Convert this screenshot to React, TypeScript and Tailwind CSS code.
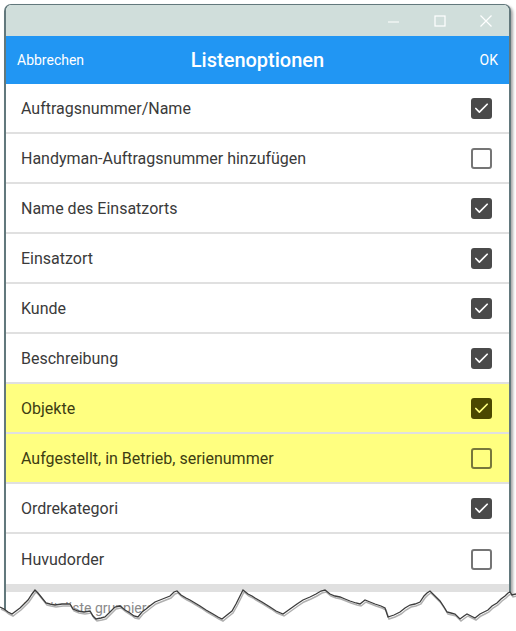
import { Check } from 'lucide-react';

type Option = { label: string; checked: boolean; highlight?: boolean };

const OPTIONS: Option[] = [
  { label: 'Auftragsnummer/Name', checked: true },
  { label: 'Handyman-Auftragsnummer hinzufügen', checked: false },
  { label: 'Name des Einsatzorts', checked: true },
  { label: 'Einsatzort', checked: true },
  { label: 'Kunde', checked: true },
  { label: 'Beschreibung', checked: true },
  { label: 'Objekte', checked: true, highlight: true },
  { label: 'Aufgestellt, in Betrieb, serienummer', checked: false, highlight: true },
  { label: 'Ordrekategori', checked: true },
  { label: 'Huvudorder', checked: false },
];

// torn paper edge, absolute coords of the page
const TEAR: [number, number][] = [
  [0, 607], [4, 609], [8, 612], [12, 614], [16, 611], [20, 608], [24, 604], [28, 600], [32, 594],
  [35, 590], [38, 593], [42, 598], [46, 603], [50, 604], [55, 605], [62, 604], [70, 604],
  [73, 609], [78, 611], [84, 612], [90, 611], [93, 616], [96, 619], [101, 618], [105, 617],
  [110, 612], [115, 607], [120, 606], [125, 610], [130, 613], [134, 616], [138, 617],
  [142, 612], [146, 609], [151, 605], [155, 602], [160, 600], [165, 598], [170, 596],
  [174, 592], [177, 591], [181, 595], [186, 598], [190, 600], [195, 603], [200, 606],
  [206, 610], [213, 614], [218, 617], [222, 619], [227, 615], [232, 611], [236, 604],
  [240, 596], [243, 590], [248, 594], [252, 596], [255, 598], [262, 602], [270, 607],
  [276, 611], [283, 614], [290, 609], [297, 604], [303, 600], [310, 597], [316, 594],
  [321, 591], [325, 590], [330, 594], [335, 596], [340, 597], [345, 599], [350, 601],
  [356, 603], [360, 604], [365, 600], [370, 602], [375, 604], [381, 606], [385, 608],
  [388, 617], [394, 615], [400, 612], [405, 608], [410, 605], [415, 604], [420, 602],
  [424, 596], [427, 593], [430, 591], [435, 596], [440, 601], [444, 607], [447, 612],
  [451, 613], [455, 614], [460, 619], [464, 616], [467, 614], [471, 616], [475, 618],
  [480, 614], [484, 612], [488, 610], [492, 606], [497, 603], [501, 599], [505, 596],
  [508, 593], [510, 592], [512, 595], [516, 594],
];
const TOP = 580;
const tearLine = TEAR.map(([x, y]) => `${x},${y - TOP}`).join(' ');
const tearFill = `${tearLine} 516,${631 - TOP} 0,${631 - TOP}`;
const tearShadow = TEAR.map(([x, y]) => `${x + 1},${y - TOP + 2}`).join(' ');

function CheckBox({ checked, highlight }: { checked: boolean; highlight?: boolean }) {
  if (checked) {
    return (
      <div
        className={
          'w-[21px] h-[21px] rounded-[3px] flex items-center justify-center ' +
          (highlight ? 'bg-[#4b4800]' : 'bg-[#4a4a4a]')
        }
      >
        <Check
          size={17}
          strokeWidth={2.4}
          className={highlight ? 'text-[#ffff80]' : 'text-white'}
        />
      </div>
    );
  }
  return (
    <div
      className={
        'w-[21px] h-[21px] rounded-[3px] border-2 ' +
        (highlight ? 'border-[#77773c]' : 'border-[#757575]')
      }
    />
  );
}

export default function App() {
  return (
    <div
      className="relative w-[516px] h-[631px] bg-white overflow-hidden pl-[4px] pt-[4px]"
      style={{ fontFamily: 'Roboto, "Noto Sans", sans-serif' }}
    >
      <div className="w-[507px] rounded-t-[7px] border-x-2 border-t border-[#62787c] overflow-hidden shadow-[2px_2px_3px_rgba(0,0,0,0.35)] bg-white">
        {/* title bar */}
        <div className="h-[31px] bg-[#d0dedb] flex items-center justify-end pr-[14px] gap-[28px]">
          <svg width="18" height="18" viewBox="0 0 18 18">
            <line x1="3" y1="10" x2="14" y2="10" stroke="#fff" strokeWidth="1.2" />
          </svg>
          <svg width="18" height="18" viewBox="0 0 18 18">
            <rect x="4" y="4" width="10" height="10" fill="none" stroke="#fff" strokeWidth="1.2" />
          </svg>
          <svg width="18" height="18" viewBox="0 0 18 18">
            <path d="M3.5 3.5 L14.5 14.5 M14.5 3.5 L3.5 14.5" stroke="#fff" strokeWidth="1.2" />
          </svg>
        </div>

        {/* header */}
        <div className="h-[48px] bg-[#2196f3] flex items-center justify-between px-[11px] text-white">
          <span className="text-[14px] w-[80px]">Abbrechen</span>
          <span className="text-[20px] font-medium">Listenoptionen</span>
          <span className="text-[14px] w-[80px] text-right">OK</span>
        </div>

        {/* options */}
        <div>
          {OPTIONS.map((o, i) => (
            <div
              key={o.label}
              className={
                'h-[50px] flex items-center justify-between pl-[15px] pr-[17px] pt-[1px] ' +
                (i < OPTIONS.length - 1 ? 'border-b-2 border-[#e0e0e0] ' : '') +
                (o.highlight ? 'bg-[#ffff80] text-[#3d3d12]' : 'bg-white text-[#3a3a3a]')
              }
            >
              <span className="text-[16px]">{o.label}</span>
              <CheckBox checked={o.checked} highlight={o.highlight} />
            </div>
          ))}
        </div>

        <div className="h-[8px] bg-[#e0e0e0]" />
        <div className="h-[40px] pl-[15px] pt-[6px] text-[14px] text-[#8a8a8a]">Arbeitsliste gruppieren</div>
      </div>

      {/* torn edge */}
      <svg
        className="absolute left-0 top-[580px]"
        width="516"
        height="51"
        viewBox="0 0 516 51"
      >
        <polygon points={tearFill} fill="#fff" />
        <polyline points={tearShadow} fill="none" stroke="#b0b0b0" strokeWidth="1.5" />
        <polyline points={tearLine} fill="none" stroke="#3c3c3c" strokeWidth="1.3" />
      </svg>
    </div>
  );
}
